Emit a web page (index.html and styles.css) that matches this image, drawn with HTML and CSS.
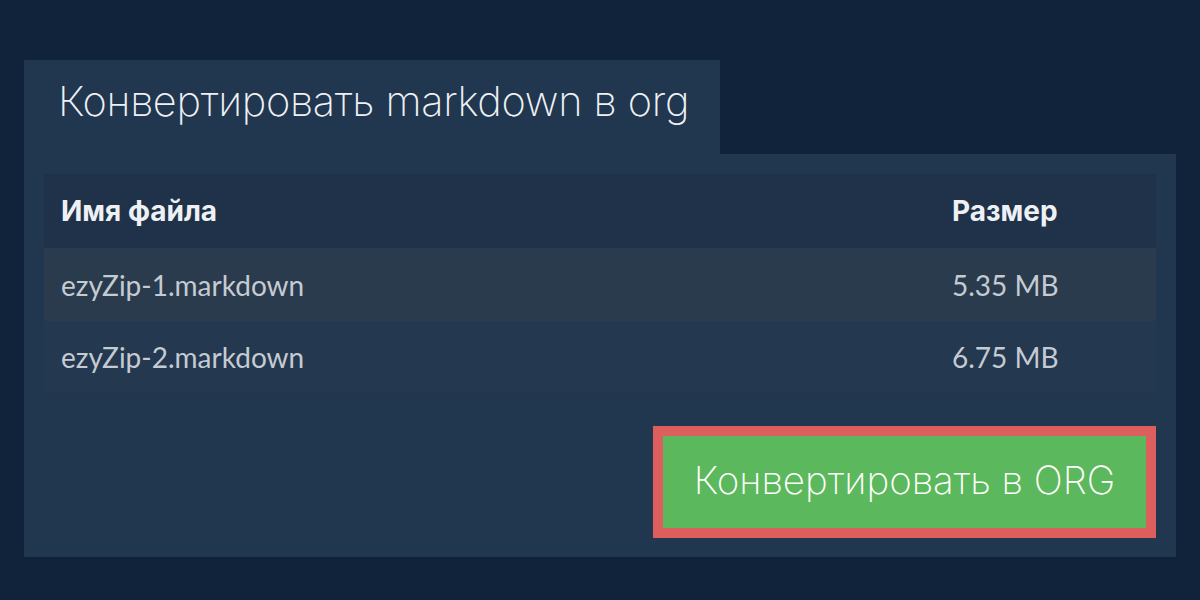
FILE: index.html
```html
<!DOCTYPE html>
<html lang="ru">
<head>
<meta charset="utf-8">
<title>Конвертировать markdown в org</title>
<link rel="stylesheet" href="styles.css">
</head>
<body>
<div class="wrap">
  <div class="tab"><h1 class="title">Конвертировать markdown в org</h1></div>
  <div class="panel">
    <div class="table">
      <div class="row head"><div class="name">Имя файла</div><div class="size">Размер</div></div>
      <div class="row odd"><div class="name">ezyZip-1.markdown</div><div class="size">5.35 MB</div></div>
      <div class="row even"><div class="name">ezyZip-2.markdown</div><div class="size">6.75 MB</div></div>
    </div>
    <div class="actions">
      <button class="btn">Конвертировать в ORG</button>
    </div>
  </div>
</div>
</body>
</html>
```

FILE: styles.css
```css
html, body {
  margin: 0;
  padding: 0;
  background: #10233a;
  width: 1200px;
  height: 600px;
  overflow: hidden;
}
.wrap {
  padding: 60px 24px 0 24px;
  display: flex;
  flex-direction: column;
  align-items: flex-start;
}
.tab {
  background: #21364f;
  width: 696px;
  height: 94px;
  box-sizing: border-box;
  padding-left: 34px;
  padding-bottom: 12px;
  display: flex;
  align-items: center;
}
.title {
  margin: 0;
  font-family: Inter, sans-serif;
  font-weight: 200;
  font-size: 41.5px;
  color: #eef1f4;
  letter-spacing: -0.3px;
  white-space: nowrap;
}
.panel {
  background: #21364f;
  width: 1152px;
  box-sizing: border-box;
  padding: 20px 20px 19px 20px;
}
.table {
  display: flex;
  flex-direction: column;
}
.row {
  display: flex;
  align-items: center;
  padding: 0 17px;
}
.row .name { flex: 1; }
.row .size { width: 187px; }
.head {
  background: #1f3249;
  height: 74px;
  font-family: Inter, sans-serif;
  font-weight: 700;
  font-size: 28px;
  color: #eef1f4;
}
.odd, .even {
  font-family: Lato, sans-serif;
  font-size: 28px;
  color: #c5cbd2;
}
.odd { background: #2a3b4d; height: 73px; }
.even { background: #243850; height: 72px; }
.actions {
  display: flex;
  justify-content: flex-end;
  margin-top: 33px;
}
.btn {
  width: 503px;
  height: 112px;
  background: #5cb85c;
  border: 10px solid #dd5f5d;
  color: #ffffff;
  font-family: Inter, sans-serif;
  font-weight: 200;
  font-size: 38.5px;
  padding: 0 0 4px 0;
  cursor: pointer;
  white-space: nowrap;
}
```
